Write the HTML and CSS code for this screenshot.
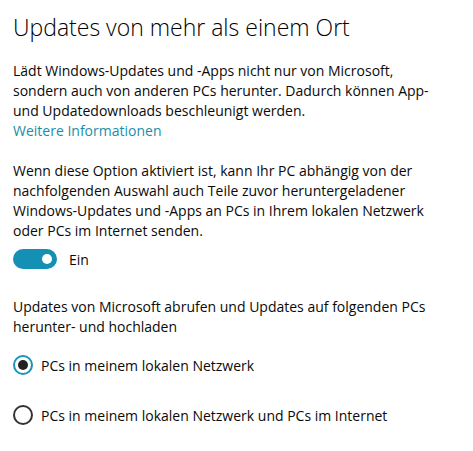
FILE: index.html
```html
<!DOCTYPE html>
<html lang="de">
<head>
    <meta charset="UTF-8">
    <title>Updates von mehr als einem Ort</title>
    <link rel="stylesheet" href="styles.css">
</head>
<body>
    <div class="settings">
        <h1>Updates von mehr als einem Ort</h1>
        <p class="desc">Lädt Windows-Updates und -Apps nicht nur von Microsoft, sondern auch von anderen PCs herunter. Dadurch können App- und Updatedownloads beschleunigt werden.<br><a href="#" class="more">Weitere Informationen</a></p>
        <p class="desc">Wenn diese Option aktiviert ist, kann Ihr PC abhängig von der nachfolgenden Auswahl auch Teile zuvor heruntergeladener Windows-Updates und -Apps an PCs in Ihrem lokalen Netzwerk oder PCs im Internet senden.</p>
        <label class="toggle-row">
            <span class="toggle on"><span class="knob"></span></span>
            <span>Ein</span>
        </label>
        <p class="desc group-label">Updates von Microsoft abrufen und Updates auf folgenden PCs herunter- und hochladen</p>
        <div class="radios">
            <label class="radio-row">
                <span class="radio checked"></span>
                <span>PCs in meinem lokalen Netzwerk</span>
            </label>
            <label class="radio-row">
                <span class="radio"></span>
                <span>PCs in meinem lokalen Netzwerk und PCs im Internet</span>
            </label>
        </div>
    </div>
</body>
</html>
```

FILE: styles.css
```css
body { margin: 0; background: #fff; font-family: "Open Sans", "Noto Sans", sans-serif; color: #0a0a0a; }
.settings { padding: 12px 13px; width: 430px; }
h1 { font-weight: 300; font-size: 23px; margin: 0 0 19px; line-height: 30px; color: #000; }
.desc { font-size: 14px; line-height: 20px; margin: 0 0 20px; }
.more { color: #1a8ea8; text-decoration: none; }
.toggle-row { display: flex; align-items: center; gap: 12px; font-size: 14px; margin-top: -12px; margin-bottom: 28px; }
.toggle { width: 44px; height: 20px; border-radius: 10px; background: #1590b5; display: flex; align-items: center; justify-content: flex-end; padding-right: 5px; box-sizing: border-box; }
.knob { width: 10px; height: 10px; border-radius: 50%; background: #fff; }
.group-label { margin-bottom: 18px; }
.radios { display: flex; flex-direction: column; gap: 30px; }
.radio-row { display: flex; align-items: center; gap: 8px; font-size: 14px; }
.radio { width: 20px; height: 20px; border-radius: 50%; border: 2px solid #333; box-sizing: border-box; display: flex; align-items: center; justify-content: center; }
.radio.checked { border-color: #1a95b5; }
.radio.checked::after { content: ""; width: 10px; height: 10px; border-radius: 50%; background: #222; }
```
